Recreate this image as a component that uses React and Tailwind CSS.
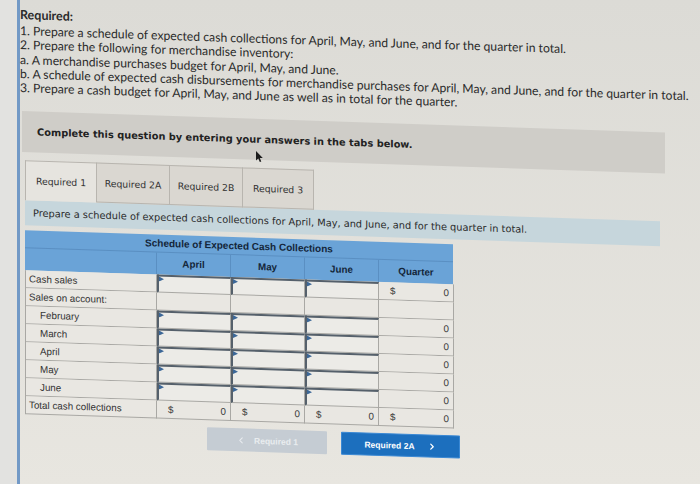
import { ChevronLeft, ChevronRight } from 'lucide-react'

const rows = [
  { label: 'Cash sales', kind: 'input', dollar: true },
  { label: 'Sales on account:', kind: 'blank' },
  { label: 'February', kind: 'input', indent: true },
  { label: 'March', kind: 'input', indent: true },
  { label: 'April', kind: 'input', indent: true },
  { label: 'May', kind: 'input', indent: true },
  { label: 'June', kind: 'input', indent: true },
  { label: 'Total cash collections', kind: 'total', dollar: true },
]

const months = ['April', 'May', 'June']

function InputCell() {
  return (
    <div className="relative h-[18px] border-t-2 border-l-2 border-r border-b border-t-[#55606b] border-l-[#55606b] border-r-[#a9a8a4] border-b-[#a9a8a4] bg-[#ecebe7]">
      <svg className="absolute left-0 top-0" width="5" height="5" viewBox="0 0 5 5">
        <polygon points="0,0 5,2.5 0,5" fill="#3c6797" />
      </svg>
    </div>
  )
}

function PlainCell({ children, className = '' }) {
  return (
    <div className={`flex h-[18px] items-center border-r border-b border-[#a9a8a4] bg-[#e9e7e2] ${className}`}>
      {children}
    </div>
  )
}

function TotalCell({ dollar }) {
  return (
    <PlainCell className="justify-between pl-[11px] pr-[4px] text-[#3a3a3a]">
      <span>{dollar ? '$' : ''}</span>
      <span>0</span>
    </PlainCell>
  )
}

export default function App() {
  return (
    <div className="relative flex h-[484px] w-[700px] overflow-hidden bg-linear-to-b from-[#dcdbd6] to-[#e8e6e0]">
      <div className="w-[17px] shrink-0 bg-[#e2e2e0]" />
      <div className="w-[3px] shrink-0 bg-[#7299c6]" />

      <div className="flex-1 origin-top-left skew-y-[1.9deg] pt-[7px]">
        {/* required list */}
        <div className="whitespace-nowrap text-[12.2px] text-[#2b2b2b]" style={{ fontFamily: 'Lato, "Open Sans", sans-serif' }}>
          <p className="text-[12.5px] font-bold leading-[15px]">Required:</p>
          <div className="mt-[2px] leading-[14.3px]">
            <p>1. Prepare a schedule of expected cash collections for April, May, and June, and for the quarter in total.</p>
            <p>2. Prepare the following for merchandise inventory:</p>
            <p>a. A merchandise purchases budget for April, May, and June.</p>
            <p>b. A schedule of expected cash disbursements for merchandise purchases for April, May, and June, and for the quarter in total.</p>
            <p>3. Prepare a cash budget for April, May, and June as well as in total for the quarter.</p>
          </div>
        </div>

        <div style={{ fontFamily: '"DejaVu Sans", Verdana, sans-serif' }}>
          <div className="ml-[2px] mt-[16px] flex h-[41px] w-[643px] items-center bg-[#cfcdc8] pl-[15px] text-[9.8px] font-bold text-[#222]">
            Complete this question by entering your answers in the tabs below.
          </div>

          <div className="ml-[5px] mt-[8px] flex h-[40px] text-[9.3px] text-[#333]">
            <div className="flex w-[72px] items-center justify-center border border-b-0 border-[#b8b5af] bg-[#e6e4df]">Required 1</div>
            <div className="flex w-[73px] items-center justify-center border border-l-0 border-[#b8b5af] bg-[#dad7d1]">Required 2A</div>
            <div className="flex w-[73px] items-center justify-center border border-l-0 border-[#b8b5af] bg-[#dad7d1]">Required 2B</div>
            <div className="flex w-[71px] items-center justify-center border border-l-0 border-[#b8b5af] bg-[#dad7d1]">Required 3</div>
          </div>

          <div className="ml-[5px] flex h-[25px] w-[635px] items-center bg-[#c6d6dc] pl-[8px] text-[9.8px] text-[#2a2a2a]">
            Prepare a schedule of expected cash collections for April, May, and June, and for the quarter in total.
          </div>
        </div>

        {/* schedule table */}
        <div className="ml-[5px] mt-[5px] w-[428px] text-[9.8px]" style={{ fontFamily: '"Liberation Sans", Arial, sans-serif' }}>
          <div className="bg-[#6aa3d7] text-[#14263a]">
            <div className="flex h-[18px] items-center justify-center border-b border-[#5a8fc2] text-[10px] font-bold">
              Schedule of Expected Cash Collections
            </div>
            <div className="grid h-[22px] grid-cols-[131px_74px_74px_74px_75px] font-bold">
              <div />
              {months.map((m) => (
                <div key={m} className="flex items-center justify-center border-l border-[#5a8fc2]">{m}</div>
              ))}
              <div className="flex items-center justify-center border-l border-[#5a8fc2]">Quarter</div>
            </div>
          </div>

          <div className="grid grid-cols-[131px_74px_74px_74px_75px] border-l border-[#a9a8a4] text-[#333]">
            {rows.map((r) => (
              <div key={r.label} className="contents">
                <PlainCell className={r.indent ? 'pl-[14px]' : 'pl-[3px]'}>{r.label}</PlainCell>
                {months.map((m) =>
                  r.kind === 'input' ? (
                    <InputCell key={m} />
                  ) : r.kind === 'total' ? (
                    <TotalCell key={m} dollar />
                  ) : (
                    <PlainCell key={m} />
                  )
                )}
                {r.kind === 'blank' ? <PlainCell /> : <TotalCell dollar={r.dollar} />}
              </div>
            ))}
          </div>
        </div>

        <div className="ml-[187px] mt-[7px] flex gap-[14px] text-[8.5px] font-bold" style={{ fontFamily: '"Liberation Sans", Arial, sans-serif' }}>
          <div className="flex h-[23px] w-[120px] items-center justify-center gap-[8px] rounded-[1px] bg-[#c5ccd3] text-[#e9ecef]">
            <ChevronLeft size={10} strokeWidth={2.5} />
            Required 1
          </div>
          <div className="flex h-[23px] w-[119px] items-center justify-center gap-[12px] rounded-[1px] border border-[#3a88d4] bg-[#1c6fbe] text-white">
            Required 2A
            <ChevronRight size={10} strokeWidth={3} />
          </div>
        </div>
      </div>

      {/* mouse pointer caught in the shot */}
      <svg className="absolute left-[256px] top-[151px]" width="8" height="12" viewBox="0 0 8 12">
        <path d="M0 0 L0 9.5 L2.3 7.4 L3.8 11 L5.3 10.4 L3.8 6.9 L6.8 6.9 Z" fill="#1c1c1c" />
      </svg>
    </div>
  )
}
